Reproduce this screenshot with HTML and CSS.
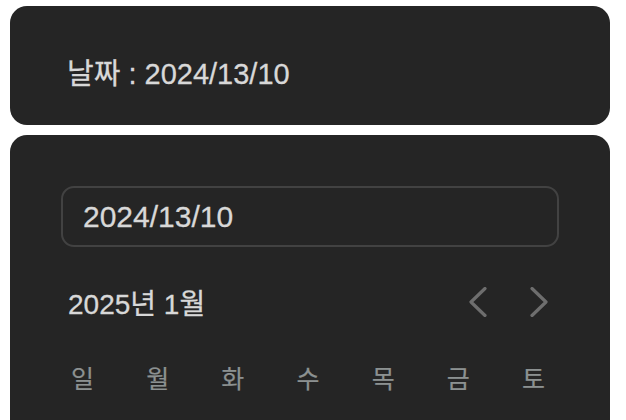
FILE: index.html
```html
<html>
<head>
    <title>날짜 선택</title>
    <meta charset="UTF-8">
    <link rel="stylesheet" href="styles.css">
</head>
<body>
    <div class="page">
        <div class="card summary">
            <span class="summary-text">날짜 : 2024/13/10</span>
        </div>

        <div class="card picker">
            <input type="text" class="date-input" value="2024/13/10">

            <div class="month-header">
                <span class="month-title">2025년 1월</span>
                <div class="month-nav">
                    <button type="button" class="nav-btn" aria-label="이전 달">
                        <svg width="18" height="30" viewBox="0 0 18 30" fill="none" stroke="currentColor" stroke-width="3.2" stroke-linecap="round" stroke-linejoin="round">
                            <path d="M16 1.5L2 15l14 13.5"/>
                        </svg>
                    </button>
                    <button type="button" class="nav-btn" aria-label="다음 달">
                        <svg width="18" height="30" viewBox="0 0 18 30" fill="none" stroke="currentColor" stroke-width="3.2" stroke-linecap="round" stroke-linejoin="round">
                            <path d="M2 1.5L16 15 2 28.5"/>
                        </svg>
                    </button>
                </div>
            </div>

            <div class="weekdays">
                <span>일</span>
                <span>월</span>
                <span>화</span>
                <span>수</span>
                <span>목</span>
                <span>금</span>
                <span>토</span>
            </div>
        </div>
    </div>
</body>
</html>
```

FILE: styles.css
```css
:root {
    --card-bg: #252525;
    --text-primary: #d8d8d8;
    --text-muted: #8c9191;
    --border: #424242;
    --icon: #6e6e6e;
}

body {
    margin: 0;
    padding: 6px 10px;
    background: white;
    font-family: 'Liberation Sans', 'Noto Sans CJK KR', sans-serif;
    overflow: hidden;
}

.page {
    width: 600px;
    display: flex;
    flex-direction: column;
    gap: 10px;
}

.card {
    background: var(--card-bg);
    border-radius: 17px;
}

.summary {
    height: 119px;
    box-sizing: border-box;
    padding: 10px 57px 0;
    display: flex;
    align-items: center;
}

.summary-text {
    color: var(--text-primary);
    font-size: 29px;
    -webkit-text-stroke: 0.3px var(--text-primary);
}

.picker {
    padding: 51px 51px 60px;
}

.date-input {
    display: block;
    width: 100%;
    height: 61px;
    box-sizing: border-box;
    padding: 0 20px;
    background: var(--card-bg);
    border: 2px solid var(--border);
    border-radius: 13px;
    color: var(--text-primary);
    font-family: inherit;
    font-size: 30px;
    -webkit-text-stroke: 0.3px var(--text-primary);
    outline: none;
}

.month-header {
    margin-top: 35px;
    height: 40px;
    padding-left: 7px;
    display: flex;
    align-items: center;
    justify-content: space-between;
}

.month-title {
    color: var(--text-primary);
    font-size: 28px;
    -webkit-text-stroke: 0.3px var(--text-primary);
}

.month-nav {
    display: flex;
    gap: 21px;
}

.nav-btn {
    width: 40px;
    height: 40px;
    padding: 0;
    background: none;
    border: none;
    color: var(--icon);
    cursor: pointer;
    display: flex;
    align-items: center;
    justify-content: center;
}

.weekdays {
    margin: 35px -12px 0 -16px;
    height: 40px;
    display: grid;
    grid-template-columns: repeat(7, 1fr);
    align-items: center;
    text-align: center;
    color: var(--text-muted);
    font-size: 25px;
    -webkit-text-stroke: 0.2px var(--text-muted);
}
```
